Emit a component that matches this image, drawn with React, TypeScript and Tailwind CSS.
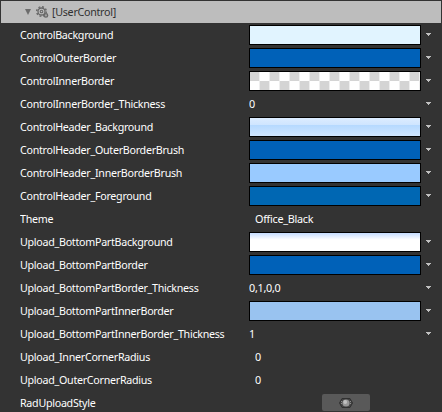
import React from 'react';

type Row = { name: string; swatch?: string; value?: string; indent?: boolean; menu?: boolean; button?: boolean };

const rows: Row[] = [
  { name: 'ControlBackground', swatch: 'bg-[#e1f4ff]', menu: true },
  { name: 'ControlOuterBorder', swatch: 'bg-[#0061b8]', menu: true },
  { name: 'ControlInnerBorder', swatch: 'checker', menu: true },
  { name: 'ControlInnerBorder_Thickness', value: '0', menu: true },
  { name: 'ControlHeader_Background', swatch: 'bg-[linear-gradient(#dcecff_0%,#cfe5ff_38%,#b5d9ff_40%,#d0e6ff_100%)]', menu: true },
  { name: 'ControlHeader_OuterBorderBrush', swatch: 'bg-[#0061b8]', menu: true },
  { name: 'ControlHeader_InnerBorderBrush', swatch: 'bg-[#99caff]', menu: true },
  { name: 'ControlHeader_Foreground', swatch: 'bg-[#0067b3]', menu: true },
  { name: 'Theme', value: 'Office_Black', indent: true },
  { name: 'Upload_BottomPartBackground', swatch: 'bg-[linear-gradient(#c5dcff_0%,#ffffff_38%)]', menu: true },
  { name: 'Upload_BottomPartBorder', swatch: 'bg-[#0061b8]', menu: true },
  { name: 'Upload_BottomPartBorder_Thickness', value: '0,1,0,0', menu: true },
  { name: 'Upload_BottomPartInnerBorder', swatch: 'bg-[#99c3f0]', menu: true },
  { name: 'Upload_BottomPartInnerBorder_Thickness', value: '1', menu: true },
  { name: 'Upload_InnerCornerRadius', value: '0', indent: true },
  { name: 'Upload_OuterCornerRadius', value: '0', indent: true },
  { name: 'RadUploadStyle', button: true },
];

function Checker() {
  return (
    <div className="grid h-full grid-cols-[repeat(17,10px)] grid-rows-2 bg-white">
      {Array.from({ length: 34 }, (_, i) => (
        <div key={i} className={i % 2 === 0 ? 'border-r border-[#eeeeee] bg-[#d4d4d4]' : 'border-r border-[#eeeeee] bg-white'} />
      ))}
    </div>
  );
}

function Gear() {
  return (
    <svg width="13" height="12" viewBox="0 0 13 12" fill="none" stroke="#686868">
      <circle cx="5.5" cy="5.5" r="3.5" strokeWidth="1.3" />
      <circle cx="5.5" cy="5.5" r="4.8" strokeWidth="1.5" strokeDasharray="1.9 1.87" />
      <circle cx="5.5" cy="5.5" r="1.3" strokeWidth="1.1" />
      <circle cx="9.9" cy="9.4" r="1.8" fill="#a0a0a0" strokeWidth="1.3" />
    </svg>
  );
}

function StyleButton() {
  return (
    <div className="ml-[73px] mt-[3px] flex h-[17px] w-12 items-center justify-center rounded-[2px] bg-[#595959]">
      <svg width="14" height="10" viewBox="0 0 14 10">
        <path d="M3 .5h8L13.5 5 11 9.5H3L.5 5z" fill="#444" stroke="#303030" />
        <path d="M2.5 3v4M11.5 3v4" stroke="#8b8b8b" strokeDasharray="1 1" />
        <circle cx="7" cy="5" r="3.6" fill="#969696" />
        <circle cx="6.2" cy="4" r="1.9" fill="#c0c0c0" />
      </svg>
    </div>
  );
}

export default function App() {
  return (
    <div className="h-[412px] w-[442px] overflow-hidden bg-[#333333] px-px pt-px font-['Noto_Sans','Open_Sans',sans-serif] text-[11.5px] tracking-[-0.3px] text-white">
      <div className="flex h-[22px] items-center bg-[#bdbdbd] text-[#303030]">
        <svg className="ml-6 mr-[5px]" width="6" height="6" viewBox="0 0 6 6"><path d="M0 0h6L3 6z" fill="#6c6c6c" /></svg>
        <Gear />
        <span className="ml-[3px] origin-left scale-x-93">[UserControl]</span>
      </div>
      {rows.map((r) => (
        <div key={r.name} className="flex h-[23px] items-start">
          <div className="w-[229px] shrink-0 pl-[19px]">
            <span className="block origin-left scale-x-93 whitespace-nowrap leading-6">{r.name}</span>
          </div>
          <div className="ml-[19px] w-[172px] shrink-0">
            {r.swatch && (
              <div className={`mt-[2px] h-5 border border-black ${r.swatch}`}>{r.swatch === 'checker' && <Checker />}</div>
            )}
            {r.value && (
              <div className={r.indent ? 'pl-[6px]' : ''}>
                <span className="block origin-left scale-x-94 leading-6">{r.value}</span>
              </div>
            )}
            {r.button && <StyleButton />}
          </div>
          {r.menu && (
            <svg className="ml-[5px] mt-[10px]" width="5" height="3" viewBox="0 0 5 3" shapeRendering="crispEdges">
              <path d="M0 0h5v1H4v1H3v1H2V2H1V1H0z" fill="#c0c0c0" />
            </svg>
          )}
        </div>
      ))}
    </div>
  );
}
